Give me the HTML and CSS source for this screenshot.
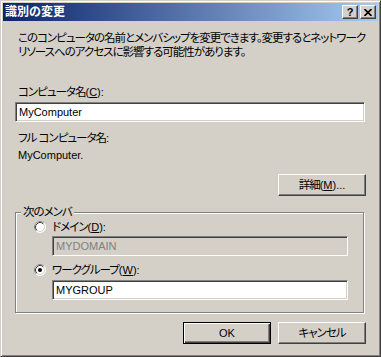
FILE: index.html
```html
<!DOCTYPE html>
<html lang="ja">
<head>
<meta charset="utf-8">
<title>識別の変更</title>
<link rel="stylesheet" href="styles.css">
</head>
<body>
<div class="window">
  <div class="titlebar">
    <span class="title">識別の変更</span>
    <div class="tb-buttons">
      <div class="tb-btn help">?</div>
      <div class="tb-btn close">
        <svg width="8" height="7" viewBox="0 0 8 7"><path d="M0.5 0 L7.5 7 M7.5 0 L0.5 7" stroke="#000" stroke-width="1.6" fill="none"/></svg>
      </div>
    </div>
  </div>
  <div class="content">
    <p class="desc">このコンピュータの名前とメンバシップを変更できます。変更するとネットワーク<br>リソースへのアクセスに影響する可能性があります。</p>
    <div class="label">コンピュータ名<span class="lt">(<u>C</u>):</span></div>
    <div class="field wide"><span class="latin">MyComputer</span></div>
    <div class="label gap9">フル コンピュータ名<span class="lt">:</span></div>
    <div class="label gap3 latin">MyComputer.</div>
    <div class="btn-row top">
      <div class="btn">詳細<span class="lt">(<u>M</u>)...</span></div>
    </div>
    <div class="group">
      <span class="legend">次のメンバ</span>
      <div class="radio-row">
        <svg class="radio" width="12" height="12" viewBox="0 0 12 12">
          <circle cx="6" cy="6" r="5.5" fill="#fff" stroke="#fff"/>
          <path d="M2.11 9.89 A5.5 5.5 0 0 1 9.89 2.11" stroke="#808080" fill="none"/>
          <circle cx="6" cy="6" r="4.5" fill="#fff" stroke="#D4D0C8"/>
          <path d="M2.82 9.18 A4.5 4.5 0 0 1 9.18 2.82" stroke="#404040" fill="none"/>
        </svg>
        <span>ドメイン<span class="lt">(<u>D</u>):</span></span>
      </div>
      <div class="field sub disabled"><span class="latin">MYDOMAIN</span></div>
      <div class="radio-row second">
        <svg class="radio" width="12" height="12" viewBox="0 0 12 12">
          <circle cx="6" cy="6" r="5.5" fill="#fff" stroke="#fff"/>
          <path d="M2.11 9.89 A5.5 5.5 0 0 1 9.89 2.11" stroke="#808080" fill="none"/>
          <circle cx="6" cy="6" r="4.5" fill="#fff" stroke="#D4D0C8"/>
          <path d="M2.82 9.18 A4.5 4.5 0 0 1 9.18 2.82" stroke="#404040" fill="none"/>
          <circle cx="6" cy="6" r="2" fill="#000"/>
        </svg>
        <span>ワークグループ<span class="lt">(<u>W</u>):</span></span>
      </div>
      <div class="field sub second-field"><span class="latin">MYGROUP</span></div>
    </div>
    <div class="btn-row bottom">
      <div class="btn default"><span class="latin">OK</span></div>
      <div class="btn">キャンセル</div>
    </div>
  </div>
</div>
</body>
</html>
```
FILE: styles.css
```css
html, body {
  margin: 0;
  padding: 0;
  background: #D4D0C8;
}
body {
  font-family: "Liberation Sans", "Noto Sans CJK JP", sans-serif;
  font-size: 11.5px;
  letter-spacing: -1px;
  color: #000;
  font-feature-settings: "palt";
}
.window {
  width: 381px;
  height: 357px;
  box-sizing: border-box;
  background: #D4D0C8;
  border: 1px solid;
  border-color: #D4D0C8 #404040 #404040 #D4D0C8;
  box-shadow: inset 1px 1px 0 #fff, inset -1px -1px 0 #808080;
  padding: 2px;
  overflow: hidden;
}
.titlebar {
  height: 18px;
  display: flex;
  align-items: center;
  background: linear-gradient(to right, #0A246A, #A6CAF0);
}
.title {
  color: #fff;
  font-weight: bold;
  font-size: 12px;
  letter-spacing: 0;
  line-height: 18px;
  padding-left: 2px;
  font-feature-settings: normal;
}
.tb-buttons {
  margin-left: auto;
  display: flex;
  gap: 2px;
  padding-right: 2px;
}
.tb-btn {
  width: 16px;
  height: 14px;
  box-sizing: border-box;
  background: #D4D0C8;
  border: 1px solid;
  border-color: #fff #404040 #404040 #fff;
  box-shadow: inset -1px -1px 0 #808080;
  display: flex;
  align-items: center;
  justify-content: center;
}
.help {
  font-family: "Liberation Sans", sans-serif;
  font-weight: bold;
  font-size: 11px;
  letter-spacing: 0;
  line-height: 12px;
}
.content {
  padding: 10px 12px 0 12px;
}
.desc {
  margin: 0;
  padding-left: 3px;
  line-height: 14px;
  white-space: nowrap;
}
.label {
  margin-top: 26px;
  padding-left: 3px;
  line-height: 14px;
  white-space: nowrap;
}
.gap9 { margin-top: 9px; }
.gap3 { margin-top: 3px; }
.latin {
  font-size: 11px;
  letter-spacing: 0;
}
.lt {
  font-size: 11px;
  letter-spacing: 0;
}
.field {
  box-sizing: border-box;
  height: 20px;
  background: #fff;
  border: 1px solid;
  border-color: #808080 #fff #fff #808080;
  box-shadow: inset 1px 1px 0 #404040, inset -1px -1px 0 #D4D0C8;
  padding-left: 3px;
  line-height: 18px;
}
.field.wide {
  margin-top: 3px;
  width: 350px;
}
.field.sub {
  margin-top: 2px;
  margin-left: 36px;
  width: 296px;
}
.field.second-field {
  margin-top: 3px;
}
.field.disabled {
  background: #D4D0C8;
  color: #808080;
}
.btn-row {
  display: flex;
  justify-content: flex-end;
  gap: 7px;
}
.btn-row.top { margin-top: 12px; }
.btn-row.bottom { margin-top: 9px; }
.btn {
  width: 88px;
  height: 22px;
  box-sizing: border-box;
  border: 1px solid;
  border-color: #fff #404040 #404040 #fff;
  box-shadow: inset -1px -1px 0 #808080;
  display: flex;
  align-items: center;
  justify-content: center;
  line-height: 14px;
  white-space: nowrap;
}
.btn.default {
  border: 1px solid #000;
  box-shadow: inset 1px 1px 0 #fff, inset -1px -1px 0 #404040, inset -2px -2px 0 #808080;
}
.group {
  position: relative;
  margin-top: 16px;
  width: 349px;
  box-sizing: border-box;
  border: 1px solid #808080;
  box-shadow: inset 1px 1px 0 #fff, 1px 1px 0 #fff;
  padding: 7px 0 12px 0;
}
.legend {
  position: absolute;
  top: -8px;
  left: 5px;
  padding: 0 2px;
  line-height: 14px;
  background: #D4D0C8;
}
.radio-row {
  display: flex;
  align-items: center;
  gap: 6px;
  padding-left: 18px;
  line-height: 14px;
  height: 14px;
}
.radio-row.second {
  margin-top: 7px;
}
.radio {
  display: block;
  flex: none;
}
```
